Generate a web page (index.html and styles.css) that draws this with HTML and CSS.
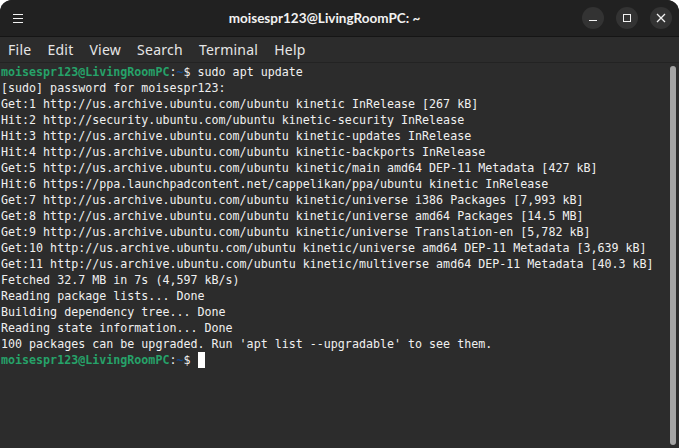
FILE: index.html
```html
<!DOCTYPE html>
<html lang="en">
<head>
<meta charset="utf-8">
<title>moisespr123@LivingRoomPC: ~</title>
<link rel="stylesheet" href="styles.css">
</head>
<body>
<div class="window">
  <header class="titlebar">
    <button class="menu-btn" aria-label="Menu">
      <svg width="10" height="9" viewBox="0 0 10 9"><path d="M0 .5h10M0 4.500h10M0 8.500h10" stroke="#f2f2f2" stroke-width="1" fill="none"/></svg>
    </button>
    <h1 class="title">moisespr123@LivingRoomPC: ~</h1>
    <div class="controls">
      <button class="ctl" aria-label="Minimize"><svg width="22" height="22" viewBox="0 0 22 22"><path d="M7 13.500h8" stroke="#f2f2f2" stroke-width="1" fill="none"/></svg></button>
      <button class="ctl" aria-label="Maximize"><svg width="22" height="22" viewBox="0 0 22 22"><rect x="7.500" y="7.500" width="7" height="7" stroke="#f2f2f2" stroke-width="1" fill="none"/></svg></button>
      <button class="ctl" aria-label="Close"><svg width="22" height="22" viewBox="0 0 22 22"><path d="M7 7l8 8M15 7l-8 8" stroke="#f2f2f2" stroke-width="1.300" fill="none"/></svg></button>
    </div>
  </header>
  <nav class="menubar">
    <span>File</span><span>Edit</span><span>View</span><span>Search</span><span>Terminal</span><span>Help</span>
  </nav>
  <main class="terminal">
    <pre class="output"><span class="user">moisespr123@LivingRoomPC</span>:<span class="path">~</span>$ sudo apt update
[sudo] password for moisespr123:
Get:1 http://us.archive.ubuntu.com/ubuntu kinetic InRelease [267 kB]
Hit:2 http://security.ubuntu.com/ubuntu kinetic-security InRelease
Hit:3 http://us.archive.ubuntu.com/ubuntu kinetic-updates InRelease
Hit:4 http://us.archive.ubuntu.com/ubuntu kinetic-backports InRelease
Get:5 http://us.archive.ubuntu.com/ubuntu kinetic/main amd64 DEP-11 Metadata [427 kB]
Hit:6 https://ppa.launchpadcontent.net/cappelikan/ppa/ubuntu kinetic InRelease
Get:7 http://us.archive.ubuntu.com/ubuntu kinetic/universe i386 Packages [7,993 kB]
Get:8 http://us.archive.ubuntu.com/ubuntu kinetic/universe amd64 Packages [14.5 MB]
Get:9 http://us.archive.ubuntu.com/ubuntu kinetic/universe Translation-en [5,782 kB]
Get:10 http://us.archive.ubuntu.com/ubuntu kinetic/universe amd64 DEP-11 Metadata [3,639 kB]
Get:11 http://us.archive.ubuntu.com/ubuntu kinetic/multiverse amd64 DEP-11 Metadata [40.3 kB]
Fetched 32.7 MB in 7s (4,597 kB/s)
Reading package lists... Done
Building dependency tree... Done
Reading state information... Done
100 packages can be upgraded. Run 'apt list --upgradable' to see them.
<span class="user">moisespr123@LivingRoomPC</span>:<span class="path">~</span>$ <span class="cursor"> </span></pre>
    <div class="scrollbar"></div>
  </main>
</div>
</body>
</html>
```
FILE: styles.css
```css
html, body { margin: 0; height: 100%; background: #fff; overflow: hidden; }
.window { display: flex; flex-direction: column; height: 448px; background: #2c2c2c; border-radius: 12px 12px 0 0; overflow: hidden; }
.titlebar { display: flex; align-items: center; height: 36px; background: #212121; border-bottom: 1px solid #151515; padding: 0 7px 0 13px; flex: none; }
.menu-btn { background: none; border: 0; padding: 0; display: flex; }
.title { flex: 1; margin: 0; padding-left: 44px; text-align: center; font: 700 13.5px "Lato", sans-serif; color: #f2f2f2; }
.controls { display: flex; gap: 12px; }
.ctl { width: 22px; height: 22px; border-radius: 50%; background: #333; border: 0; padding: 0; display: flex; }
.menubar { display: flex; gap: 16px; height: 25px; align-items: center; padding: 0 8px; background: #2c2c2c; border-bottom: 1px solid #232323; font: 14px "Noto Sans", sans-serif; letter-spacing: .25px; color: #e6e6e6; flex: none; }
.terminal { flex: 1; position: relative; background: #2c2c2c; }
.output { margin: 0; padding: 1px 0 0 1px; font: 11.67px/16px "DejaVu Sans Mono", monospace; color: #f0f0f0; }
.user { color: #26a269; font-weight: 700; }
.path { color: #12488b; font-weight: 700; }
.cursor { display: inline-block; width: 7px; height: 16px; background: #fff; vertical-align: top; }
.scrollbar { position: absolute; right: 3px; top: 3px; width: 6px; height: 379px; border-radius: 3px; background: #a5a5a5; }
```
